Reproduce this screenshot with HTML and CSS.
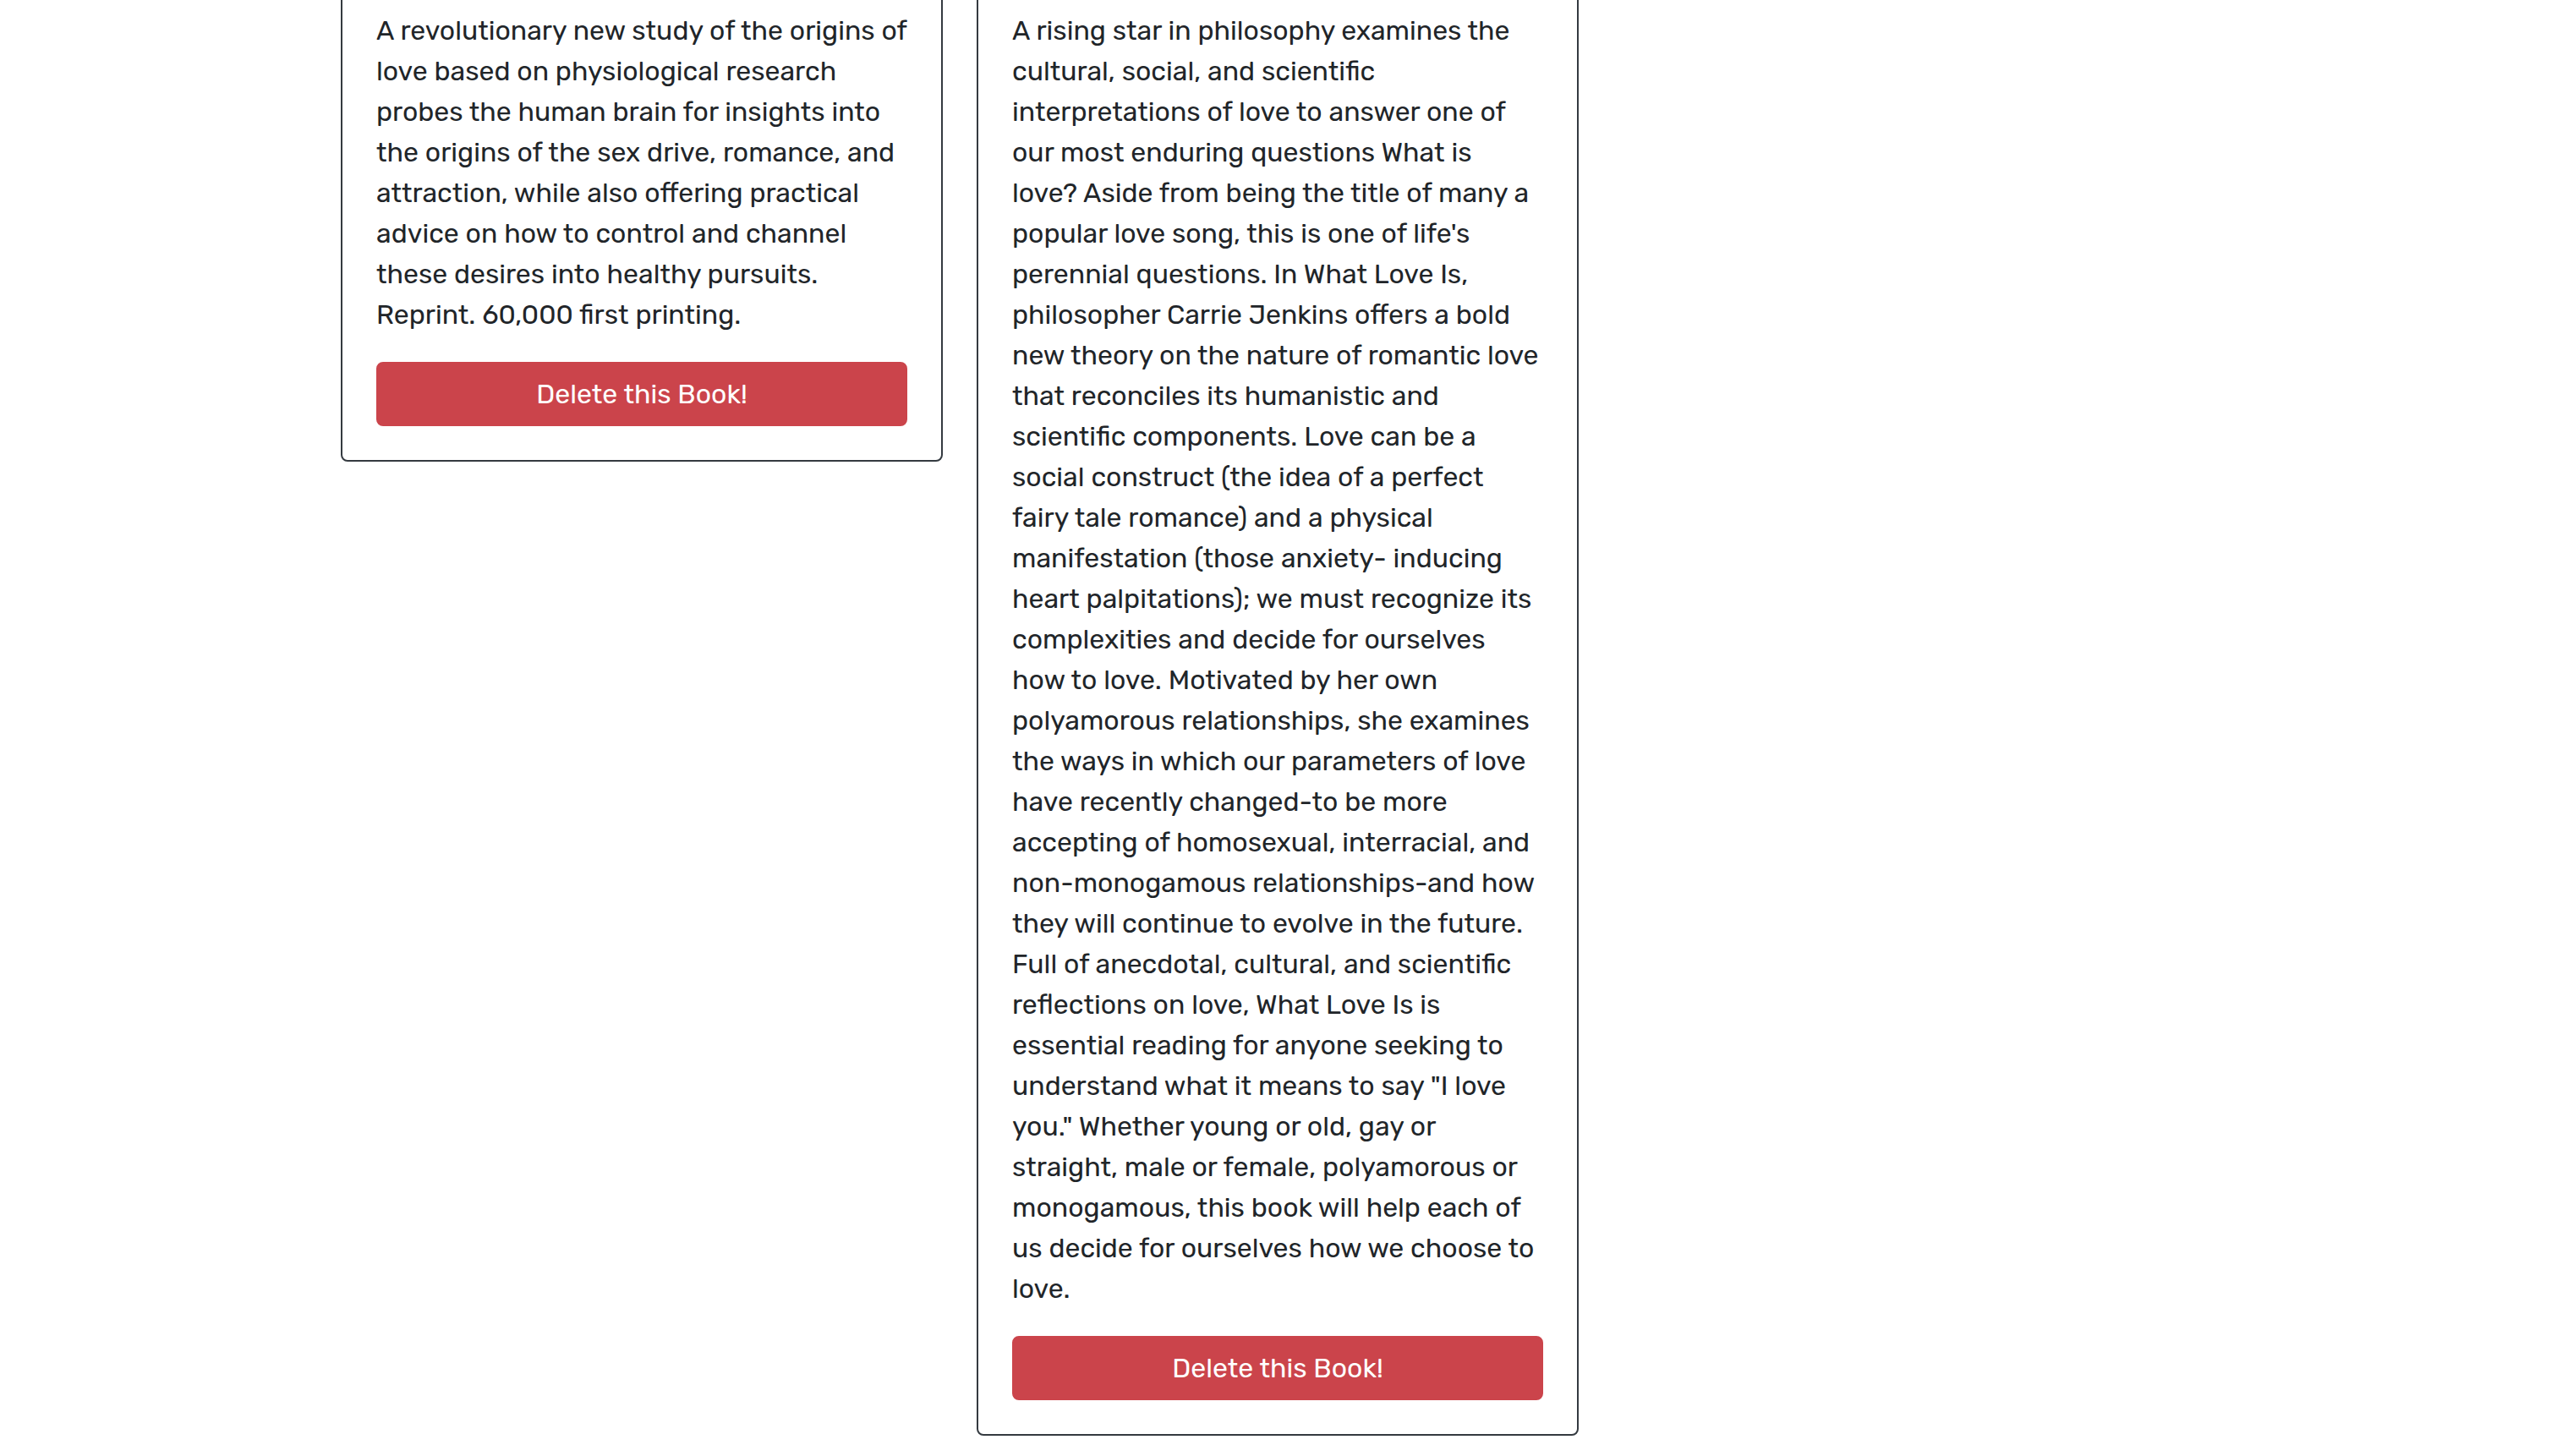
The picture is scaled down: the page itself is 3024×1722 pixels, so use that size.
FILE: index.html
```html
<!DOCTYPE html>
<html lang="en">
<head>
<meta charset="utf-8">
<title>Books</title>
<link rel="stylesheet" href="styles.css">
</head>
<body>
<main class="book-list">
  <article class="card">
    <div class="card-body">
      <p class="card-text">A revolutionary new study of the origins of love based on physiological research probes the human brain for insights into the origins of the sex drive, romance, and attraction, while also offering practical advice on how to control and channel these desires into healthy pursuits. Reprint. 60,000 first printing.</p>
      <button class="btn-delete" type="button">Delete this Book!</button>
    </div>
  </article>
  <article class="card">
    <div class="card-body">
      <p class="card-text">A rising star in philosophy examines the cultural, social, and scientific interpretations of love to answer one of our most enduring questions What is love? Aside from being the title of many a popular love song, this is one of life's perennial questions. In What Love Is, philosopher Carrie Jenkins offers a bold new theory on the nature of romantic love that reconciles its humanistic and scientific components. Love can be a social construct (the idea of a perfect fairy tale romance) and a physical manifestation (those anxiety- inducing heart palpitations); we must recognize its complexities and decide for ourselves how to love. Motivated by her own polyamorous relationships, she examines the ways in which our parameters of love have recently changed-to be more accepting of homosexual, interracial, and non-monogamous relationships-and how they will continue to evolve in the future. Full of anecdotal, cultural, and scientific reflections on love, What Love Is is essential reading for anyone seeking to understand what it means to say "I love you." Whether young or old, gay or straight, male or female, polyamorous or monogamous, this book will help each of us decide for ourselves how we choose to love.</p>
      <button class="btn-delete" type="button">Delete this Book!</button>
    </div>
  </article>
</main>
</body>
</html>
```
FILE: styles.css
```css
html, body {
  margin: 0;
  padding: 0;
  background: #ffffff;
}

body {
  font-family: "Rubik", "Noto Sans", sans-serif;
  font-size: 32px;
  line-height: 48px;
  color: #212529;
}

.book-list {
  display: flex;
  align-items: flex-start;
  gap: 40px;
  padding-left: 403px;
  margin-top: -30px;
}

.card {
  box-sizing: border-box;
  width: 712px;
  border: 2px solid #343a40;
  border-radius: 8px;
  background: #ffffff;
}

.card-body {
  padding: 40px;
}

.card-text {
  margin: 0 0 32px 0;
}

.btn-delete {
  display: block;
  box-sizing: border-box;
  width: 100%;
  height: 76px;
  padding: 12px 24px;
  border: 2px solid #cb444b;
  border-radius: 8px;
  background: #cb444b;
  color: #ffffff;
  font-family: "Rubik", "Noto Sans", sans-serif;
  font-size: 32px;
  line-height: 48px;
  text-align: center;
  cursor: pointer;
}
```
